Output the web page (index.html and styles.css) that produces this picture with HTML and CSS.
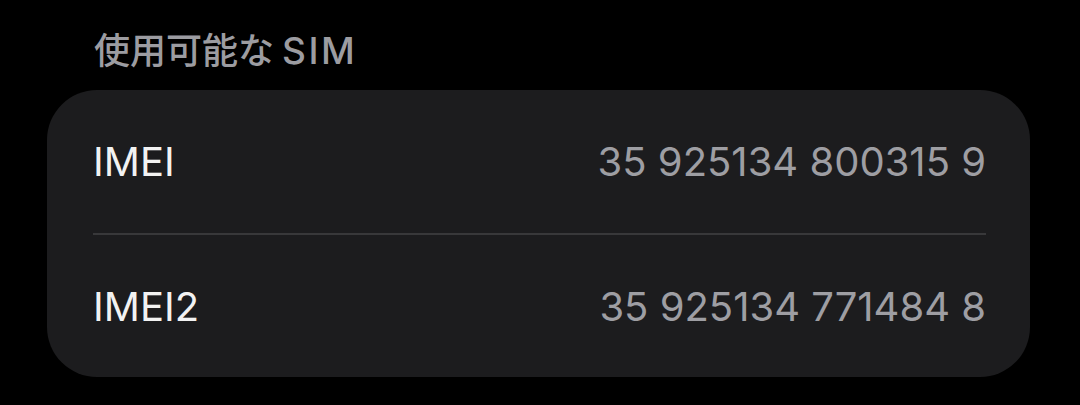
FILE: index.html
```html
<!DOCTYPE html>
<html lang="ja">
<head>
<meta charset="utf-8">
<link rel="stylesheet" href="styles.css">
</head>
<body>
<div class="screen">
  <div class="section-title">使用可能な<span class="latin">SIM</span></div>
  <div class="card">
    <div class="row">
      <span class="label">IMEI</span>
      <span class="value">35 925134 800315 9</span>
    </div>
    <div class="row">
      <span class="label">IMEI2</span>
      <span class="value">35 925134 771484 8</span>
    </div>
  </div>
</div>
</body>
</html>
```
FILE: styles.css
```css
html, body {
  margin: 0;
  padding: 0;
  background: #000;
}
.screen {
  width: 1080px;
  height: 405px;
  background: #000;
  font-family: Inter, "Noto Sans CJK JP", sans-serif;
  overflow: hidden;
}
.section-title {
  height: 90px;
  box-sizing: border-box;
  padding: 30px 0 0 94px;
  font-size: 36px;
  line-height: 42px;
  font-weight: 500;
  color: #9c9ca1;
}
.latin {
  font-size: 37px;
  letter-spacing: 2.5px;
  margin-left: 8px;
}
.card {
  margin-left: 47px;
  width: 983px;
  background: #1c1c1e;
  border-radius: 50px;
  padding: 0 44px 0 46px;
  box-sizing: border-box;
}
.row {
  height: 143px;
  display: flex;
  align-items: center;
  justify-content: space-between;
  font-size: 40px;
}
.row + .row {
  border-top: 2px solid #38383a;
  height: 142px;
}
.label {
  color: #f2f2f2;
}
.value {
  color: #9e9ea3;
}
```
